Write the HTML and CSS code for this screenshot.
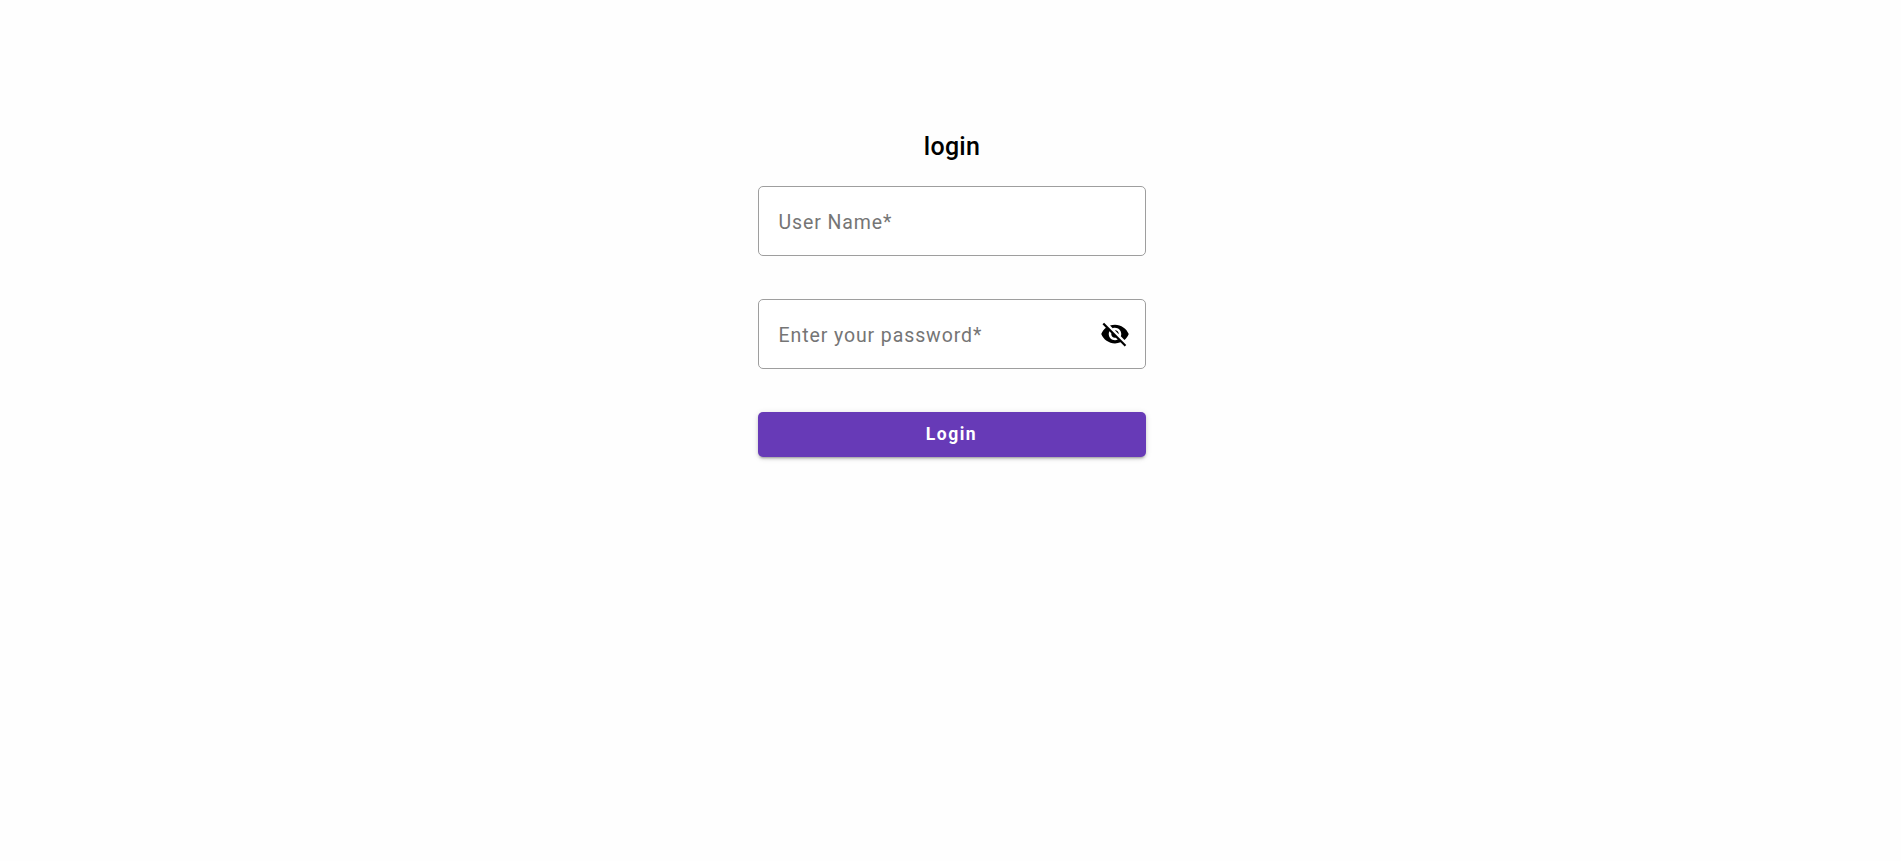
FILE: index.html
```html
<!DOCTYPE html>
<html lang="en">
<head>
<meta charset="utf-8">
<title>login</title>
<link rel="stylesheet" href="styles.css">
</head>
<body>
<main class="login">
  <h1 class="login-title">login</h1>
  <form class="login-form">
    <div class="field">
      <input class="field-input" type="text" placeholder="User Name*">
    </div>
    <div class="field">
      <input class="field-input" type="password" placeholder="Enter your password*">
      <button class="field-toggle" type="button" aria-label="Show password">
        <svg class="field-icon" viewBox="0 0 24 24"><path d="M12 7c2.76 0 5 2.24 5 5 0 .65-.13 1.26-.36 1.83l2.92 2.92c1.51-1.26 2.7-2.89 3.43-4.75-1.73-4.39-6-7.5-11-7.5-1.4 0-2.74.25-3.98.7l2.16 2.16C10.74 7.13 11.35 7 12 7zM2 4.27l2.28 2.28.46.46C3.08 8.3 1.78 10.02 1 12c1.73 4.39 6 7.5 11 7.5 1.55 0 3.03-.3 4.38-.84l.42.42L19.73 22 21 20.73 3.27 3 2 4.27zM7.53 9.8l1.55 1.55c-.05.21-.08.43-.08.65 0 1.66 1.34 3 3 3 .22 0 .44-.03.65-.08l1.55 1.55c-.67.33-1.41.53-2.2.53-2.76 0-5-2.24-5-5 0-.79.2-1.53.53-2.2zm4.31-.78l3.15 3.15.02-.16c0-1.66-1.34-3-3-3l-.17.01z"/></svg>
      </button>
    </div>
    <button class="login-button" type="submit">Login</button>
  </form>
</main>
</body>
</html>
```
FILE: styles.css
```css
* {
  box-sizing: border-box;
}

html,
body {
  height: 100%;
}

body {
  margin: 0;
  background: #fefefe;
  font-family: Roboto, "Liberation Sans", sans-serif;
}

.login {
  display: flex;
  flex-direction: column;
  align-items: center;
  padding: 131px 0 0 2px;
}

.login-title {
  margin: 0 0 23px;
  padding-left: 1px;
  font-size: 25px;
  line-height: 32px;
  font-weight: 500;
  letter-spacing: 0.25px;
  color: #000;
}

.login-form {
  display: flex;
  flex-direction: column;
  gap: 43px;
  width: 388px;
}

.field {
  display: flex;
  align-items: center;
  height: 70px;
  padding: 0 15px 0 19px;
  background: #fff;
  border: 1px solid #9e9e9e;
  border-radius: 5px;
}

.field-input {
  flex: 1;
  min-width: 0;
  padding: 4px 0 0 1px;
  border: 0;
  outline: 0;
  background: transparent;
  font: 400 19.5px/28px Roboto, "Liberation Sans", sans-serif;
  letter-spacing: 0.9px;
  color: #000;
}

.field-input::placeholder {
  color: #757575;
  opacity: 1;
}

.field-toggle {
  display: flex;
  padding: 0;
  border: 0;
  background: none;
}

.field-icon {
  width: 30px;
  height: 30px;
  fill: #000;
}

.login-button {
  height: 45px;
  padding: 0 0 2px;
  border: 0;
  border-radius: 5px;
  background: #673ab7;
  color: #fff;
  font: 700 17.5px/24px Roboto, "Liberation Sans", sans-serif;
  letter-spacing: 1.5px;
  box-shadow: 0 3px 2px -2px rgba(0, 0, 0, .2), 0 2px 3px 0 rgba(0, 0, 0, .14), 0 1px 6px 0 rgba(0, 0, 0, .12);
}
```
